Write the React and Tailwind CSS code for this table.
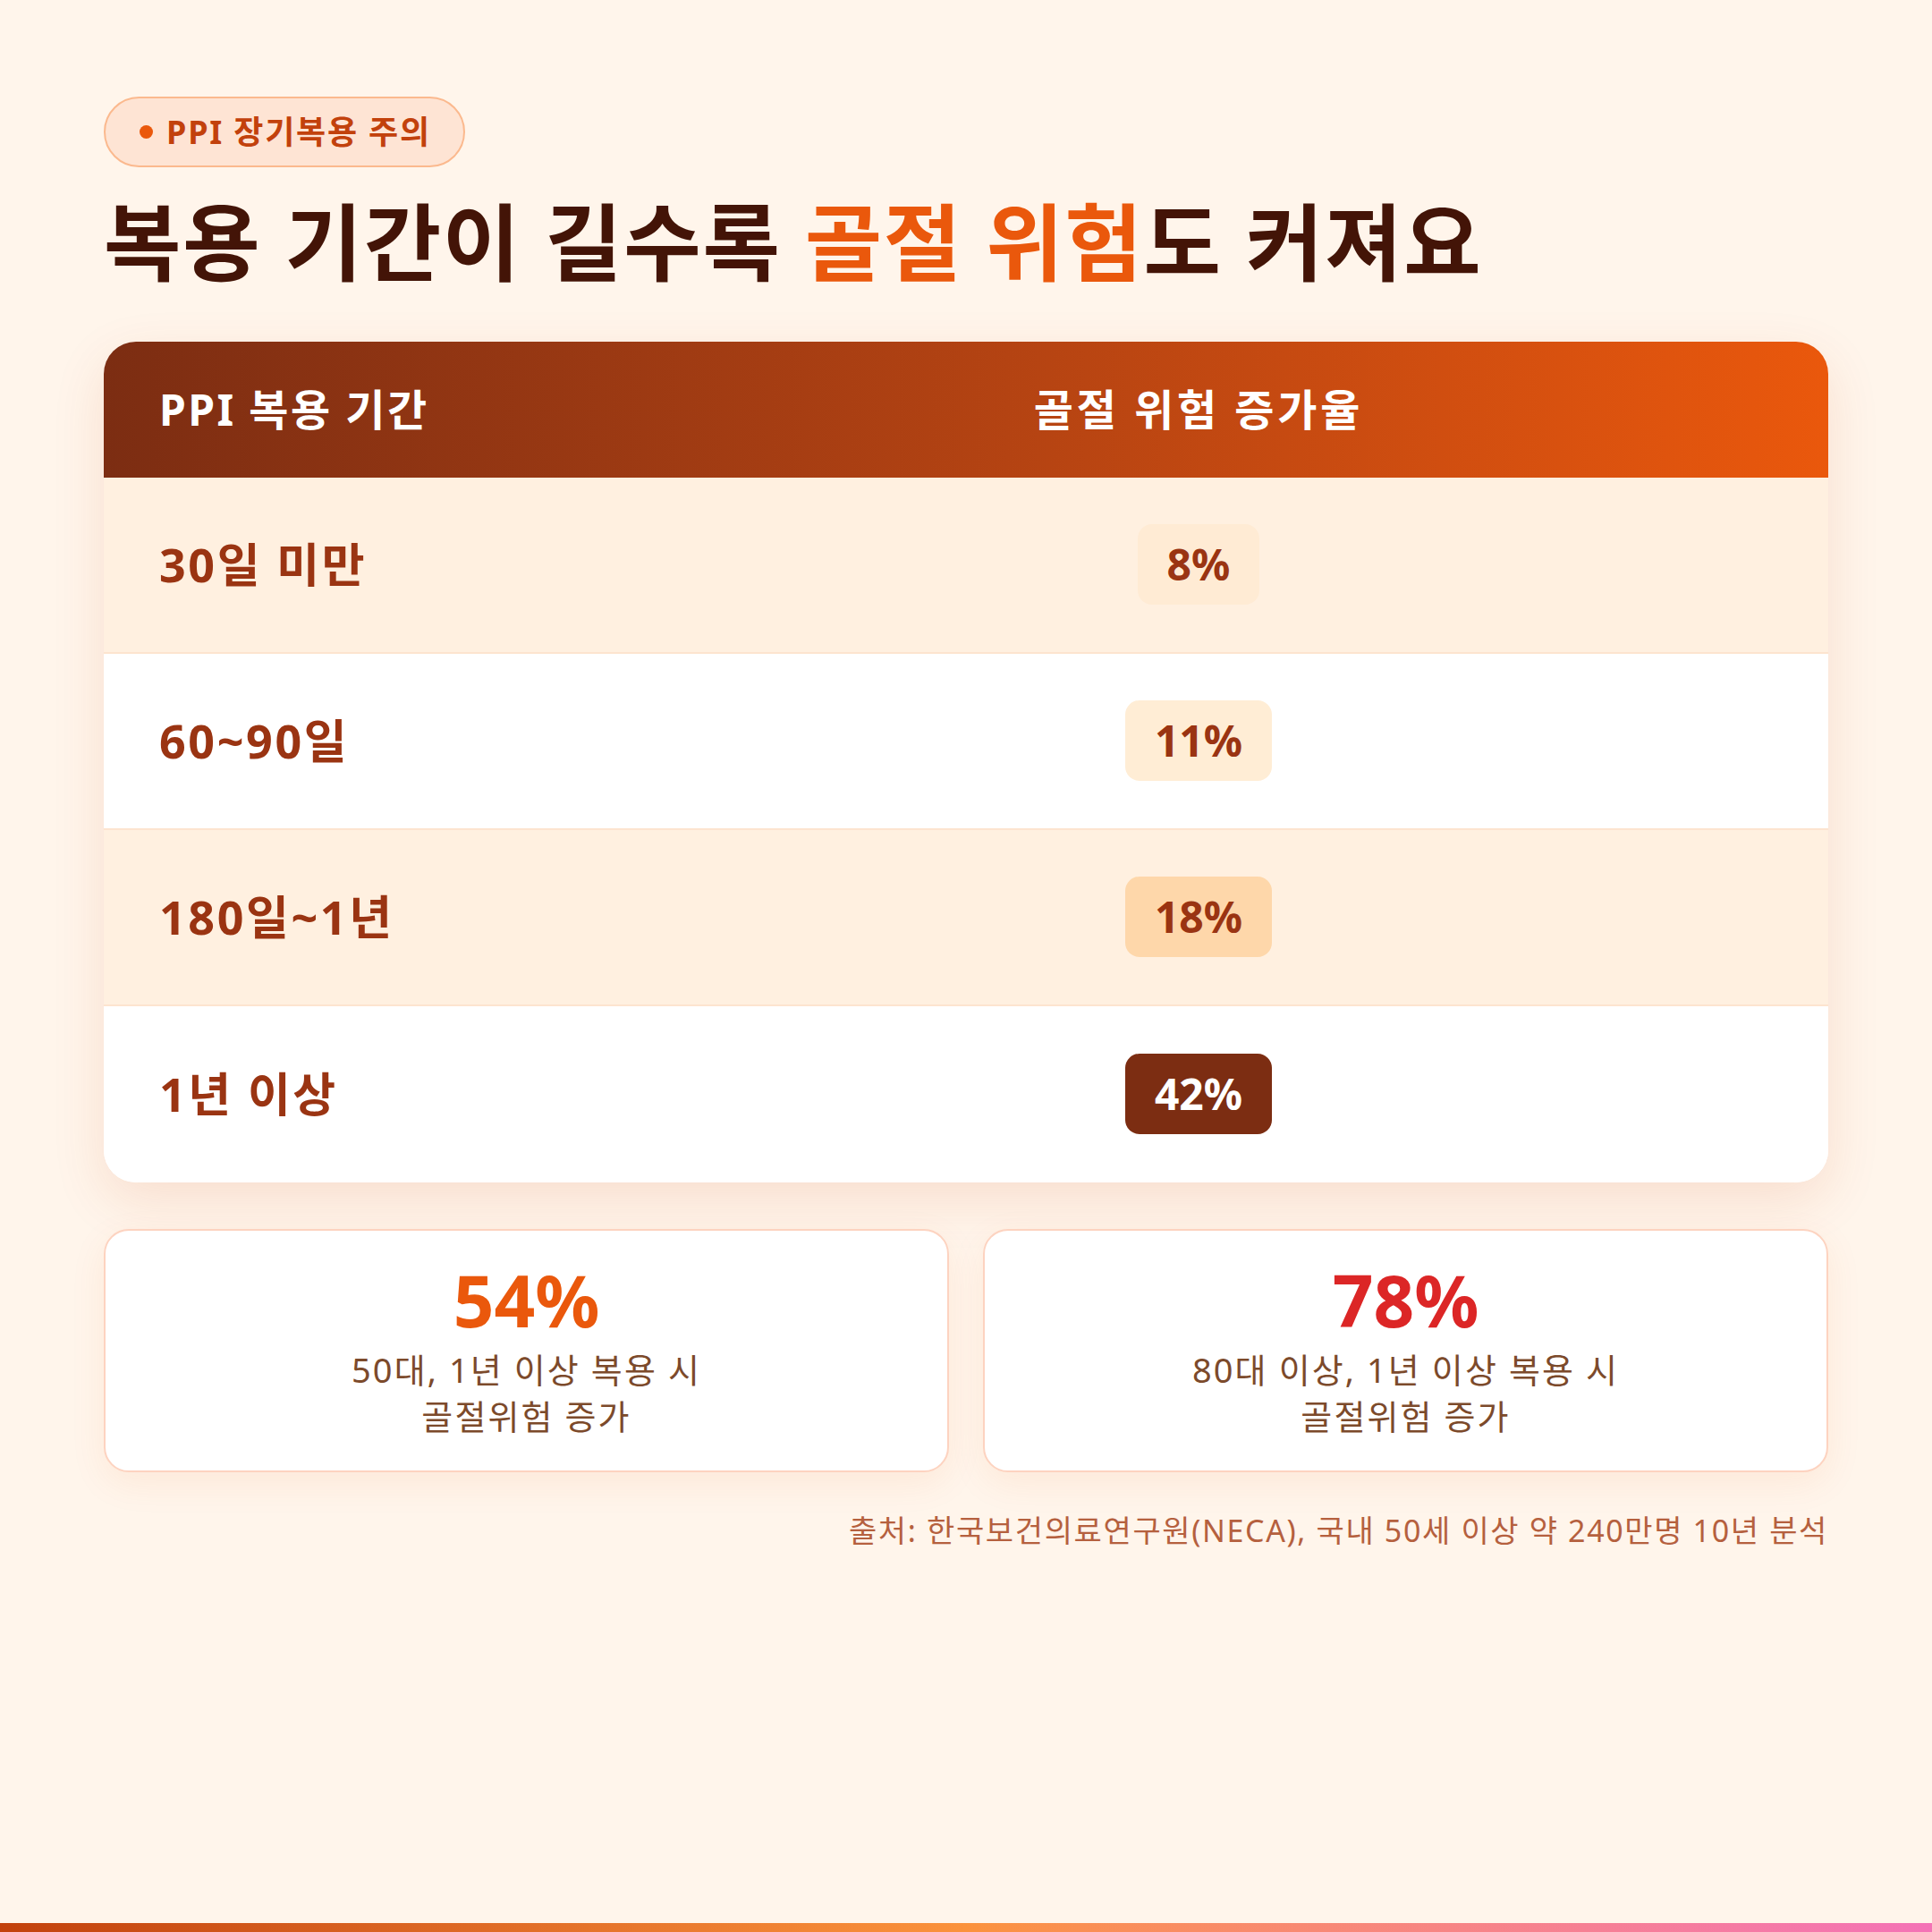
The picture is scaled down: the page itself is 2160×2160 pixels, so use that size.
import React from "react";

const rows = [
  { label: "30일 미만", value: "8%", bg: "bg-[#fff0e0]", pill: "bg-[#ffebd4] text-[#9a3412]" },
  { label: "60~90일", value: "11%", bg: "bg-white", pill: "bg-[#ffedd5] text-[#9a3412]" },
  { label: "180일~1년", value: "18%", bg: "bg-[#fff0e0]", pill: "bg-[#fed7aa] text-[#9a3412]" },
  { label: "1년 이상", value: "42%", bg: "bg-white", pill: "bg-[#7c2d12] text-white" },
];

const stats = [
  { value: "54%", color: "text-[#ea580c]", line1: "50대, 1년 이상 복용 시", line2: "골절위험 증가" },
  { value: "78%", color: "text-[#dc2626]", line1: "80대 이상, 1년 이상 복용 시", line2: "골절위험 증가" },
];

const App = () => {
  return (
    <div
      className="w-full h-[2160px] flex flex-col bg-[#fff5eb]"
      style={{ fontFamily: '"Noto Sans", "Noto Sans CJK KR", sans-serif' }}
    >
      <div className="flex flex-col px-[116px] pt-[108px]">
        {/* badge */}
        <div className="self-start flex items-center gap-[15px] h-[79px] pl-[38px] pr-[36px] rounded-full border-2 border-[#fbb98e] bg-[#fee4d4]">
          <span className="w-[15px] h-[15px] rounded-full bg-[#ea580c]" />
          <span className="text-[36px] font-bold text-[#c2410c] leading-none tracking-[0.05em]">PPI 장기복용 주의</span>
        </div>

        <h1 className="mt-[28px] text-[94px] font-bold leading-[1.2] text-[#431407] tracking-[0.018em]">
          복용 기간이 길수록 <span className="text-[#ea580c]">골절 위험</span>도 커져요
        </h1>

        {/* table */}
        <div className="mt-[54px] rounded-[36px] overflow-hidden bg-white shadow-[0_20px_60px_rgba(194,65,12,0.12)]">
          <div className="grid grid-cols-[520px_1fr] items-center h-[152px] bg-gradient-to-r from-[#7c2d12] to-[#ea580c] text-white">
            <div className="pl-[62px] text-[48px] font-bold tracking-[0.05em]">PPI 복용 기간</div>
            <div className="text-center text-[48px] font-bold tracking-[0.08em]">골절 위험 증가율</div>
          </div>
          {rows.map((r, i) => (
            <div
              key={r.label}
              className={`grid grid-cols-[520px_1fr] items-center h-[197px] ${r.bg} ${
                i < rows.length - 1 ? "border-b-2 border-[#fde4cf]" : ""
              }`}
            >
              <div className="pl-[62px] text-[52px] font-bold text-[#9a3412] tracking-[0.05em]">{r.label}</div>
              <div className="flex justify-center">
                <span className={`px-[33px] py-[16px] rounded-[16px] text-[48px] leading-[58px] font-bold ${r.pill}`}>
                  {r.value}
                </span>
              </div>
            </div>
          ))}
        </div>

        {/* stat cards */}
        <div className="mt-[52px] grid grid-cols-2 gap-[38px]">
          {stats.map((s) => (
            <div
              key={s.value}
              className="flex flex-col items-center pt-[37px] pb-[35px] rounded-[28px] border-2 border-[#fdd3c0] bg-white shadow-[0_12px_40px_rgba(234,88,12,0.08)]"
            >
              <div className={`text-[80px] font-bold leading-none ${s.color}`}>{s.value}</div>
              <div className="mt-[12px] text-[38px] leading-[52px] text-[#7c4a2b] text-center tracking-[0.055em]">
                <div>{s.line1}</div>
                <div>{s.line2}</div>
              </div>
            </div>
          ))}
        </div>

        <p className="mt-[40px] text-right text-[34px] leading-[1.5] text-[#b5603e] tracking-[0.048em]">
          출처: 한국보건의료연구원(NECA), 국내 50세 이상 약 240만명 10년 분석
        </p>
      </div>

      <div className="mt-auto h-[10px] w-full bg-gradient-to-r from-[#c2410c] via-[#fb923c] to-[#f472b6]" />
    </div>
  );
};

export default App;
